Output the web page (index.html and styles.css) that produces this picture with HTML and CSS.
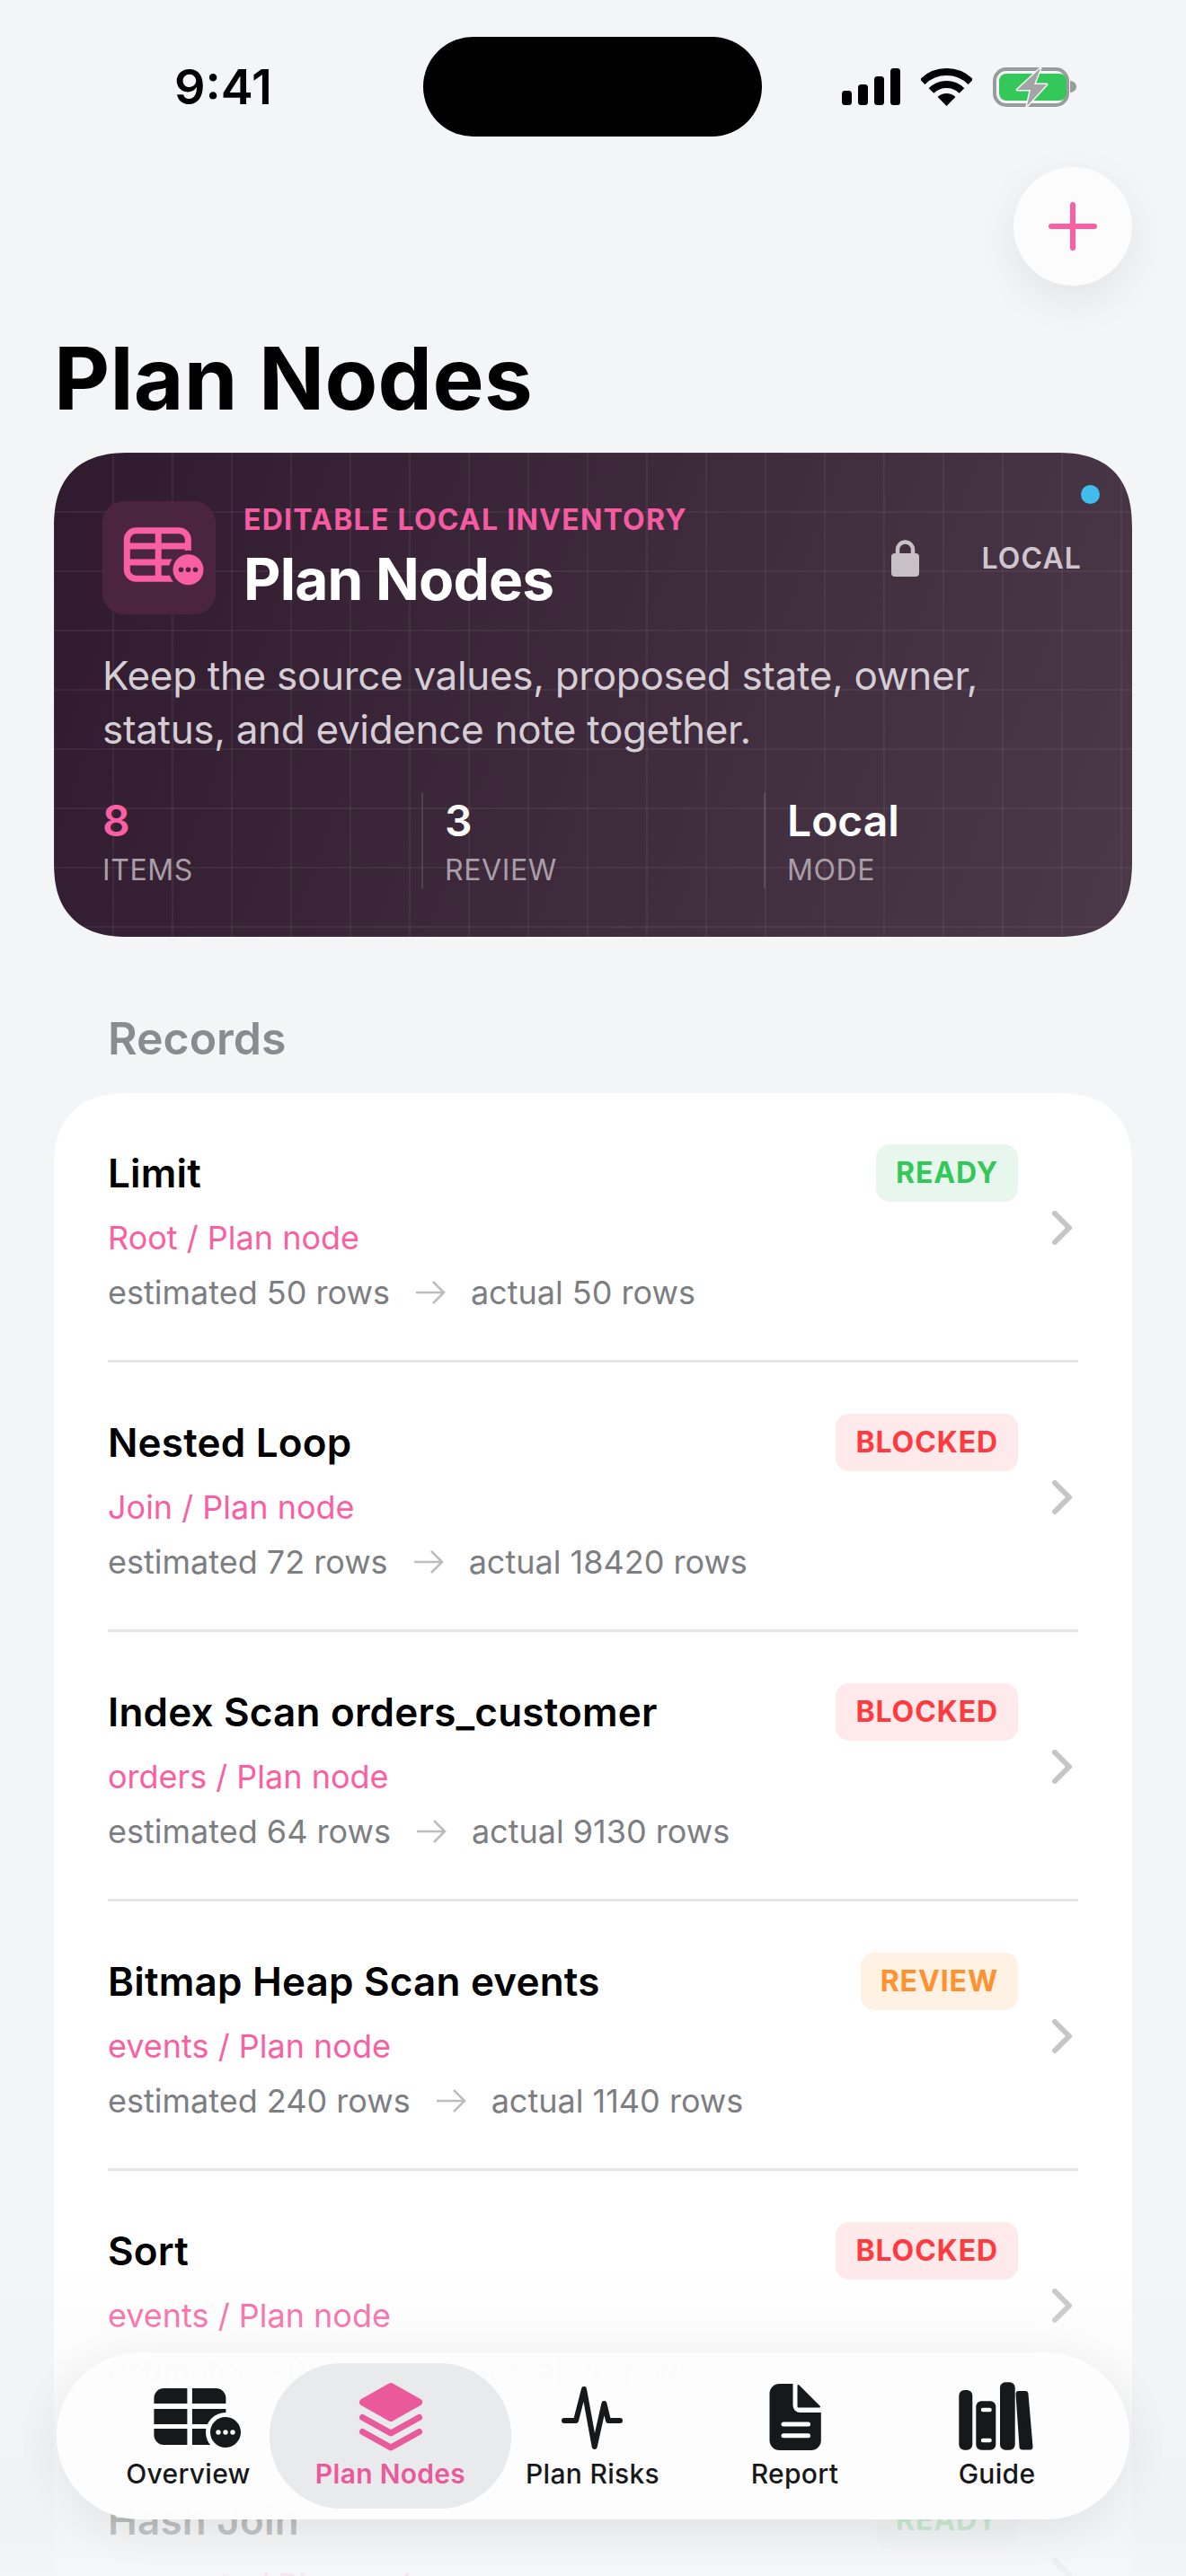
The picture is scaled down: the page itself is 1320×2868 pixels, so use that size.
FILE: index.html
```html
<!DOCTYPE html>
<html lang="en">
<head>
  <meta charset="UTF-8" />
  <meta name="viewport" content="width=device-width, initial-scale=1.0"/>
  <title>Plan Nodes</title>
  <link rel="stylesheet" href="styles.css">
</head>
<body>
  <svg class="defs" width="0" height="0">
    <symbol id="arrow" viewBox="0 0 34 28">
      <path d="M1 14H32M20 2L32 14L20 26" fill="none" stroke="currentColor" stroke-width="2.6"/>
    </symbol>
    <symbol id="chevron" viewBox="0 0 22 38">
      <path d="M3 3L19 19L3 35" fill="none" stroke="currentColor" stroke-width="6" stroke-linecap="round" stroke-linejoin="round"/>
    </symbol>
  </svg>

  <div class="phone">
    <div class="status">
      <span class="time">9:41</span>
      <div class="island"></div>
      <div class="status-icons">
        <svg class="signal" width="66" height="42" viewBox="0 0 66 42">
          <rect x="0" y="25" width="11" height="16" rx="3.5"/>
          <rect x="18" y="18" width="11" height="23" rx="3.5"/>
          <rect x="36" y="9" width="11" height="32" rx="3.5"/>
          <rect x="54" y="0" width="11" height="41" rx="3.5"/>
        </svg>
        <svg class="wifi" width="57" height="42" viewBox="0 0 57 42">
          <path d="M1.63 15.13A38 38 0 0 1 55.37 15.13" fill="none" stroke="#000" stroke-width="8"/>
          <path d="M11.53 25.03A24 24 0 0 1 45.47 25.03" fill="none" stroke="#000" stroke-width="8"/>
          <path d="M28.5 42L18.6 32.1A14 14 0 0 1 38.4 32.1Z"/>
        </svg>
        <svg class="battery" width="93" height="44" viewBox="0 0 93 44">
          <rect x="2" y="2" width="81" height="40" rx="13" fill="none" stroke="#9a9b9d" stroke-width="4"/>
          <rect x="7" y="7" width="75" height="30" rx="8" fill="#34c759"/>
          <path d="M86 15c4 0 7 3 7 6.500s-3 6.500-7 6.500z" fill="#9a9b9d"/>
          <path d="M53 1L27 25H42L38 43L60 19H46Z" fill="#a3a4a6" stroke="#f4f5f7" stroke-width="3" stroke-linejoin="round" paint-order="stroke"/>
        </svg>
      </div>
    </div>

    <button class="fab">
      <svg width="54" height="54" viewBox="0 0 54 54">
        <path d="M27 3V51M3 27H51" fill="none" stroke="#f95fa2" stroke-width="6" stroke-linecap="round"/>
      </svg>
    </button>

    <h1 class="page-title">Plan Nodes</h1>

    <section class="hero">
      <span class="hero-dot"></span>
      <div class="hero-head">
        <div class="hero-tile">
          <svg width="126" height="126" viewBox="0 0 126 126">
            <rect x="27.300" y="32.800" width="68" height="53.400" rx="10" fill="none" stroke="#f95fa2" stroke-width="7"/>
            <path d="M62.200 33V86M27 50H95M27 68H95" fill="none" stroke="#f95fa2" stroke-width="7"/>
            <circle cx="95.500" cy="76.300" r="21.500" fill="#4b2540"/>
            <circle cx="95.500" cy="76.300" r="17" fill="#f95fa2"/>
            <circle cx="87.500" cy="76.300" r="2.800" fill="#4b2540"/>
            <circle cx="95.500" cy="76.300" r="2.800" fill="#4b2540"/>
            <circle cx="103.500" cy="76.300" r="2.800" fill="#4b2540"/>
          </svg>
        </div>
        <div class="hero-titles">
          <div class="eyebrow">EDITABLE LOCAL INVENTORY</div>
          <h2>Plan Nodes</h2>
        </div>
        <div class="hero-local">
          <svg width="31" height="42" viewBox="0 0 31 42">
            <path d="M7 19V12a8.500 8.500 0 0 1 17 0V19" fill="none" stroke="#c8c0c6" stroke-width="4.500"/>
            <rect x="0" y="16" width="31" height="26" rx="4" fill="#c8c0c6"/>
          </svg>
          <span>LOCAL</span>
        </div>
      </div>
      <p class="hero-desc">Keep the source values, proposed state, owner, status, and evidence note together.</p>
      <div class="stats">
        <div class="stat">
          <div class="stat-num pink">8</div>
          <div class="stat-label">ITEMS</div>
        </div>
        <div class="stat">
          <div class="stat-num">3</div>
          <div class="stat-label">REVIEW</div>
        </div>
        <div class="stat">
          <div class="stat-num">Local</div>
          <div class="stat-label">MODE</div>
        </div>
      </div>
    </section>

    <h3 class="section-title">Records</h3>

    <section class="list">
      <div class="row">
        <div class="row-main">
          <div class="row-head">
            <span class="row-title">Limit</span>
            <span class="badge ready">READY</span>
          </div>
          <div class="row-sub">Root / Plan node</div>
          <div class="row-meta"><span>estimated 50 rows</span><svg class="arrow"><use href="#arrow"/></svg><span>actual 50 rows</span></div>
        </div>
        <svg class="chevron"><use href="#chevron"/></svg>
      </div>
      <div class="row">
        <div class="row-main">
          <div class="row-head">
            <span class="row-title">Nested Loop</span>
            <span class="badge blocked">BLOCKED</span>
          </div>
          <div class="row-sub">Join / Plan node</div>
          <div class="row-meta"><span>estimated 72 rows</span><svg class="arrow"><use href="#arrow"/></svg><span>actual 18420 rows</span></div>
        </div>
        <svg class="chevron"><use href="#chevron"/></svg>
      </div>
      <div class="row">
        <div class="row-main">
          <div class="row-head">
            <span class="row-title">Index Scan orders_customer</span>
            <span class="badge blocked">BLOCKED</span>
          </div>
          <div class="row-sub">orders / Plan node</div>
          <div class="row-meta"><span>estimated 64 rows</span><svg class="arrow"><use href="#arrow"/></svg><span>actual 9130 rows</span></div>
        </div>
        <svg class="chevron"><use href="#chevron"/></svg>
      </div>
      <div class="row">
        <div class="row-main">
          <div class="row-head">
            <span class="row-title">Bitmap Heap Scan events</span>
            <span class="badge review">REVIEW</span>
          </div>
          <div class="row-sub">events / Plan node</div>
          <div class="row-meta"><span>estimated 240 rows</span><svg class="arrow"><use href="#arrow"/></svg><span>actual 1140 rows</span></div>
        </div>
        <svg class="chevron"><use href="#chevron"/></svg>
      </div>
      <div class="row">
        <div class="row-main">
          <div class="row-head">
            <span class="row-title">Sort</span>
            <span class="badge blocked">BLOCKED</span>
          </div>
          <div class="row-sub">events / Plan node</div>
          <div class="row-meta"><span>estimated 90 rows</span><svg class="arrow"><use href="#arrow"/></svg><span>actual 90 rows</span></div>
        </div>
        <svg class="chevron"><use href="#chevron"/></svg>
      </div>
      <div class="row">
        <div class="row-main">
          <div class="row-head">
            <span class="row-title">Hash Join</span>
            <span class="badge ready">READY</span>
          </div>
          <div class="row-sub">accounts / Plan node</div>
        </div>
        <svg class="chevron"><use href="#chevron"/></svg>
      </div>
    </section>

    <div class="fade"></div>

    <nav class="tabbar">
      <a class="tab">
        <svg width="120" height="80" viewBox="0 0 120 80">
          <path d="M21.400 19a11 11 0 0 1 11-11H58.400V25H21.400Z"/>
          <path d="M63.900 8H90.400a11 11 0 0 1 11 11V25H63.900Z"/>
          <rect x="21.400" y="31" width="37" height="17"/>
          <rect x="63.900" y="31" width="37.500" height="17"/>
          <path d="M21.400 53H58.400V71H32.400a11 11 0 0 1-11-11Z"/>
          <rect x="63.900" y="53" width="37.500" height="18"/>
          <circle cx="101" cy="57" r="22" fill="#fdfdfe"/>
          <circle cx="101" cy="57" r="17"/>
          <circle cx="93" cy="57" r="2.700" fill="#fff"/>
          <circle cx="101" cy="57" r="2.700" fill="#fff"/>
          <circle cx="109" cy="57" r="2.700" fill="#fff"/>
        </svg>
        <span>Overview</span>
      </a>
      <a class="tab active">
        <svg width="120" height="80" viewBox="0 0 120 80">
          <path d="M60 6L91 23.500L60 41L29 23.500Z" fill="currentColor" stroke="currentColor" stroke-width="8" stroke-linejoin="round"/>
          <path d="M28.500 40.500L60 58L91.500 40.500M28.500 56.500L60 74L91.500 56.500" fill="none" stroke="currentColor" stroke-width="7" stroke-linecap="round" stroke-linejoin="round"/>
        </svg>
        <span>Plan Nodes</span>
      </a>
      <a class="tab">
        <svg width="120" height="80" viewBox="0 0 120 80">
          <path d="M28 44H41L50 9L61.700 73L72.400 25L77 44H90" fill="none" stroke="#17181a" stroke-width="6" stroke-linecap="round" stroke-linejoin="round"/>
        </svg>
        <span>Plan Risks</span>
      </a>
      <a class="tab">
        <svg width="120" height="80" viewBox="0 0 120 80">
          <path d="M42.500 3H57.500V27a8 8 0 0 0 8 8H88.800V66a11 11 0 0 1-11 11H42.500a11 11 0 0 1-11-11V14a11 11 0 0 1 11-11Z"/>
          <path d="M63.500 5L87 28.500H63.500Z" stroke="#17181a" stroke-width="2" stroke-linejoin="round"/>
          <path d="M47 48H74.500M47 60.700H74.500" fill="none" stroke="#fff" stroke-width="5" stroke-linecap="round"/>
        </svg>
        <span>Report</span>
      </a>
      <a class="tab">
        <svg width="120" height="80" viewBox="0 0 120 80">
          <rect x="17.300" y="10" width="15" height="66.700" rx="6"/>
          <rect x="36.300" y="22.300" width="22" height="54.400" rx="6"/>
          <path d="M44 32H51.500M44 66H51.500" fill="none" stroke="#fff" stroke-width="4.500" stroke-linecap="round"/>
          <rect x="63" y="1.300" width="16.700" height="75.400" rx="6"/>
          <path d="M84 14.500L91 14.500L96 73L88 73Z" stroke="#17181a" stroke-width="7" stroke-linejoin="round"/>
        </svg>
        <span>Guide</span>
      </a>
    </nav>
  </div>
</body>
</html>
```

FILE: styles.css
```css
* {
  box-sizing: border-box;
}
body {
  margin: 0;
  font-family: Inter, "Noto Sans", sans-serif;
  background: #f4f5f7;
  color: #000;
}
h1, h2, h3, p {
  margin: 0;
}
.defs {
  position: absolute;
}
.phone {
  position: relative;
  width: 1320px;
  height: 2868px;
  overflow: hidden;
  background: #f4f5f7;
}

/* status bar */
.status {
  display: grid;
  grid-template-columns: 471px 377px 1fr;
  align-items: center;
  padding-top: 41px;
}
.time {
  padding-left: 194px;
  font-size: 54px;
  font-weight: 600;
  line-height: 111px;
}
.island {
  height: 111px;
  border-radius: 56px;
  background: #000;
}
.status-icons {
  display: flex;
  align-items: center;
  padding-left: 89px;
  gap: 22px;
}
.wifi {
  margin-right: 1px;
}

.fab {
  display: flex;
  align-items: center;
  justify-content: center;
  width: 132px;
  height: 132px;
  margin: 34px 60px 0 auto;
  padding: 0;
  border: none;
  border-radius: 50%;
  background: #fcfcfd;
  box-shadow: 0 16px 48px rgba(0,0,0,0.07);
}
.page-title {
  margin: 45px 0 25px 60px;
  font-size: 96px;
  font-weight: 700;
  line-height: 116px;
  letter-spacing: 0.3px;
}

/* hero card */
.hero {
  position: relative;
  margin: 0 60px;
  padding: 54px 54px 54px;
  border-radius: 84px;
  corner-shape: superellipse(1.3);
  background-color: #3c2839;
  background-image:
    linear-gradient(90deg, rgba(255,255,255,0.05) 2px, transparent 2px),
    linear-gradient(rgba(255,255,255,0.05) 2px, transparent 2px),
    linear-gradient(110deg, #2f1b2d, #4b3849);
  background-size: 66px 66px, 66px 66px, 100% 100%;
  background-position: 65px 0, 0 65px, 0 0;
}
.hero-dot {
  position: absolute;
  top: 36px;
  right: 36px;
  width: 21px;
  height: 21px;
  border-radius: 50%;
  background: #41bdec;
}
.hero-head {
  display: flex;
  align-items: center;
  gap: 31px;
}
.hero-tile {
  width: 126px;
  height: 126px;
  border-radius: 24px;
  background: #4b2540;
}
.hero-tile svg {
  display: block;
}
.hero-titles {
  flex: 1;
}
.eyebrow {
  font-size: 32px;
  font-weight: 700;
  line-height: 40px;
  letter-spacing: 1.25px;
  color: #f45ba0;
}
.hero h2 {
  margin-top: 8px;
  font-size: 64px;
  font-weight: 700;
  line-height: 76px;
  letter-spacing: -0.8px;
  color: #fff;
}
.hero-local {
  display: flex;
  align-items: center;
  gap: 70px;
  margin-right: 2px;
  font-size: 32px;
  font-weight: 600;
  letter-spacing: 1.1px;
  color: #cfc7cd;
}
.hero-desc {
  margin-top: 38px;
  width: 1000px;
  font-size: 44px;
  line-height: 60px;
  letter-spacing: -0.32px;
  color: #d6ced5;
}
.stats {
  display: grid;
  grid-template-columns: 355px 381px 1fr;
  margin-top: 40px;
}
.stat {
  height: 107px;
  padding-top: 2px;
  padding-left: 24px;
  border-left: 2px solid rgba(255,255,255,0.12);
}
.stat:first-child {
  padding-left: 0;
  border-left: none;
}
.stat-num {
  font-size: 48px;
  font-weight: 600;
  line-height: 60px;
  color: #fff;
}
.stat-num.pink {
  color: #f95fa2;
}
.stat-label {
  margin-top: 5px;
  font-size: 32px;
  line-height: 40px;
  letter-spacing: 0.6px;
  color: #a99ea8;
}

.section-title {
  margin: 84px 0 31px 120px;
  font-size: 50px;
  font-weight: 600;
  line-height: 59px;
  color: #8a8b91;
}

/* records */
.list {
  margin: 0 60px;
  padding: 0 60px;
  border-radius: 84px 84px 0 0;
  corner-shape: superellipse(1.3);
  background: #fff;
}
.row {
  display: flex;
  align-items: center;
  gap: 38px;
  height: 300px;
  padding-right: 7px;
  border-bottom: 3px solid #e6e6e8;
}
.row-main {
  flex: 1;
  align-self: flex-start;
  padding-top: 57px;
}
.row-head {
  display: flex;
  align-items: center;
  justify-content: space-between;
  height: 64px;
}
.row-title {
  font-size: 44px;
  font-weight: 600;
  line-height: 64px;
  letter-spacing: 0.2px;
}
.badge {
  height: 64px;
  padding: 0 22px;
  border-radius: 15px;
  font-size: 32px;
  font-weight: 700;
  line-height: 64px;
  letter-spacing: 0.9px;
}
.ready {
  background: #e8f7ed;
  color: #34c759;
}
.blocked {
  background: #fee9eb;
  color: #ff3b3f;
}
.review {
  background: #fff1e3;
  color: #ff9230;
}
.row-sub {
  margin-top: 16px;
  font-size: 36px;
  line-height: 48px;
  color: #f95fa2;
}
.row-meta {
  display: flex;
  align-items: center;
  gap: 28px;
  margin-top: 13px;
  font-size: 36px;
  line-height: 48px;
  color: #7d7e82;
}
.arrow {
  width: 34px;
  height: 28px;
  color: #bdbdbf;
}
.chevron {
  width: 22px;
  height: 38px;
  margin-top: 3px;
  color: #c5c5c7;
}

/* bottom fade and tab bar */
.fade {
  position: absolute;
  left: 0;
  right: 0;
  top: 2520px;
  bottom: 0;
  background: linear-gradient(rgba(244,245,247,0), rgba(240,241,243,0.8) 85%, rgba(244,245,247,0.9));
  pointer-events: none;
}
.tabbar {
  position: absolute;
  left: 63px;
  top: 2619px;
  width: 1194px;
  height: 186px;
  display: grid;
  grid-template-columns: repeat(5, 225px);
  padding: 12px 34px;
  border-radius: 93px;
  background: rgba(253,253,254,0.98);
  box-shadow: 0 10px 50px rgba(0,0,0,0.08);
}
.tab {
  display: flex;
  flex-direction: column;
  align-items: center;
  padding-top: 20px;
  font-size: 30px;
  font-weight: 500;
  line-height: 36px;
  letter-spacing: 0.3px;
  color: #17181a;
  fill: #17181a;
}
.tab svg {
  margin-bottom: 5px;
}
.tab.active {
  margin: 0 -22px;
  border-radius: 80px;
  background: #e9eaeb;
  font-weight: 600;
  color: #ea5a9a;
  fill: #ea5a9a;
}
```
